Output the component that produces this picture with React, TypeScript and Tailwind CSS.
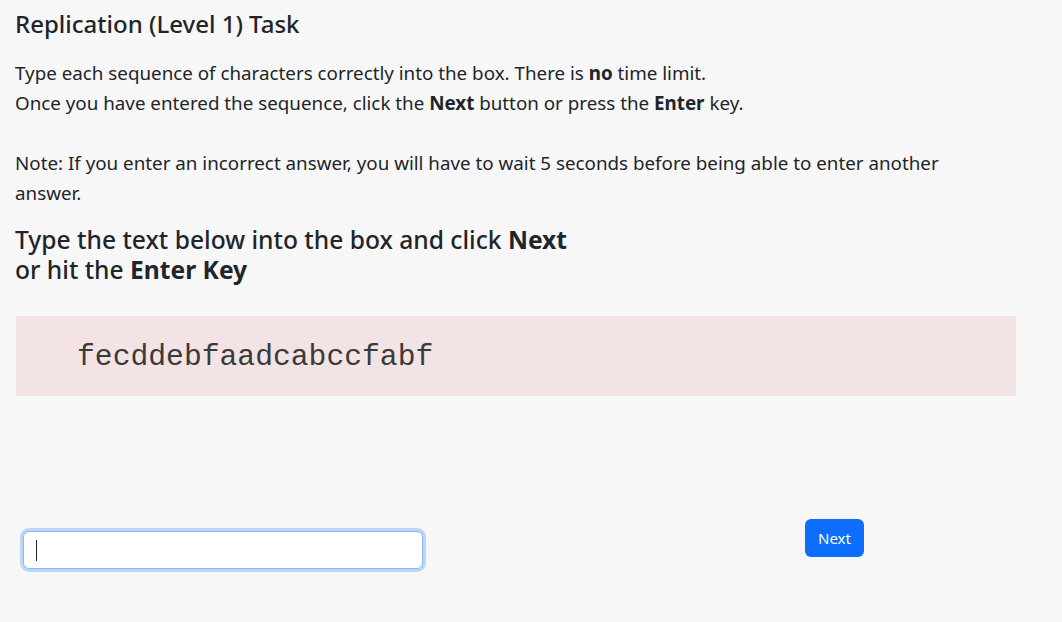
import React from 'react';

const font = { fontFamily: '"Noto Sans", "Open Sans", sans-serif' };

const App: React.FC = () => {
  return (
    <div className="min-h-screen bg-[#f7f7f8] text-[#212529]" style={font}>
      <div className="w-[1002px] pl-[15px] pt-[9px]">
        {/* Title */}
        <h1 className="text-[24px] leading-[30px] font-medium">Replication (Level 1) Task</h1>

        {/* Instructions */}
        <div className="mt-[19px] text-[18.8px] leading-[30px]">
          <p>
            Type each sequence of characters correctly into the box. There is <b>no</b> time limit.
          </p>
          <p>
            Once you have entered the sequence, click the <b>Next</b> button or press the <b>Enter</b> key.
          </p>
          <p className="mt-[30px]">
            Note: If you enter an incorrect answer, you will have to wait 5 seconds before being able to enter another
            answer.
          </p>
        </div>

        <h2 className="mt-[17px] text-[24.6px] leading-[30px] font-medium">
          Type the text below into the box and click <b>Next</b>
          <br />
          or hit the <b>Enter Key</b>
        </h2>

        {/* Sequence to copy */}
        <div className="mt-[31px] ml-[1px] flex h-[80px] w-[1000px] items-center bg-[#f3e3e4] pl-[61px] pt-[4px]">
          <span className="font-['Liberation_Mono','Courier_New',monospace] text-[29.7px] leading-none text-[#3a3a3a]">
            fecddebfaadcabccfabf
          </span>
        </div>

        {/* Answer row */}
        <div className="mt-[123px] flex items-start">
          <div className="relative ml-[8px] mt-[12px]">
            <input
              type="text"
              className="block h-[38px] w-[400px] rounded-[6px] border border-[#86b7fe] bg-white px-3 caret-transparent shadow-[0_0_0_3px_#bdd5f9] outline-none"
            />
            <span className="absolute left-[13px] top-[9px] h-[21px] w-px bg-[#212529]" />
          </div>
          <button className="ml-[382px] h-[38px] w-[59px] rounded-[6px] bg-[#0d6efd] text-[15px] text-white">
            Next
          </button>
        </div>
      </div>
    </div>
  );
};

export default App;
